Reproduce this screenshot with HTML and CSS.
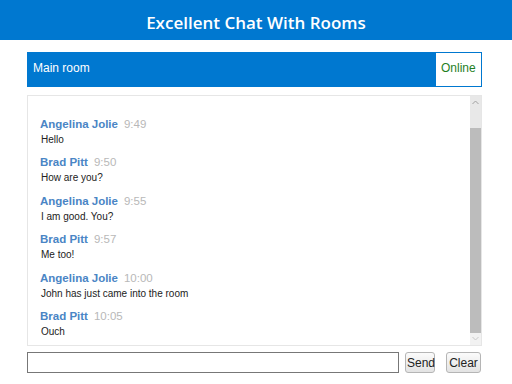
FILE: index.html
```html
<!DOCTYPE html>
<html lang="en">
<head>
  <meta charset="UTF-8">
  <meta name="viewport" content="width=device-width, initial-scale=1.0">
  <title>Excellent Chat With Rooms</title>
  <link rel="stylesheet" href="styles.css">
</head>
<body>
  <header>
    <h1>Excellent Chat With Rooms</h1>
  </header>

  <div class="container">
    <div class="room-bar">
      <div class="room-name">Main room</div>
      <div class="room-status">Online</div>
    </div>

    <div class="chat-box">
      <div class="messages">
        <div class="message">
          <div class="meta"><span class="author">Angelina Jolie</span><span class="time">9:49</span></div>
          <div class="text">Hello</div>
        </div>
        <div class="message">
          <div class="meta"><span class="author">Brad Pitt</span><span class="time">9:50</span></div>
          <div class="text">How are you?</div>
        </div>
        <div class="message">
          <div class="meta"><span class="author">Angelina Jolie</span><span class="time">9:55</span></div>
          <div class="text">I am good. You?</div>
        </div>
        <div class="message">
          <div class="meta"><span class="author">Brad Pitt</span><span class="time">9:57</span></div>
          <div class="text">Me too!</div>
        </div>
        <div class="message">
          <div class="meta"><span class="author">Angelina Jolie</span><span class="time">10:00</span></div>
          <div class="text">John has just came into the room</div>
        </div>
        <div class="message">
          <div class="meta"><span class="author">Brad Pitt</span><span class="time">10:05</span></div>
          <div class="text">Ouch</div>
        </div>
      </div>

      <!-- fake scrollbar -->
      <div class="scrollbar">
        <div class="scroll-btn">
          <svg width="7" height="5" viewBox="0 0 7 5"><path d="M0.5 4 L3.5 1 L6.5 4" fill="none" stroke="#a0a0a0" stroke-width="1"/></svg>
        </div>
        <div class="scroll-thumb"></div>
        <div class="scroll-btn bottom">
          <svg width="7" height="5" viewBox="0 0 7 5"><path d="M0.5 1 L3.5 4 L6.5 1" fill="none" stroke="#c8c8c8" stroke-width="1"/></svg>
        </div>
      </div>
    </div>

    <div class="input-row">
      <input type="text" class="msg-input">
      <button class="send">Send</button>
      <button class="clear">Clear</button>
    </div>
  </div>
</body>
</html>
```

FILE: styles.css
```css
* { margin: 0; padding: 0; box-sizing: border-box; }
body {
  font-family: 'Liberation Sans', Arial, sans-serif;
  background-color: #ffffff;
  color: #222222;
}

header {
  background-color: #0078d0;
  height: 40px;
  display: flex;
  align-items: center;
  justify-content: center;
}
header h1 {
  font-family: 'Open Sans', sans-serif;
  font-size: 17px;
  font-weight: 600;
  color: #ffffff;
  padding-top: 5px;
}

.container { margin: 12px 30px 0 27px; }

.room-bar {
  display: flex;
  height: 35px;
  background-color: #0078d0;
  border: 1px solid #0078d0;
}
.room-name {
  flex: 1;
  display: flex;
  align-items: center;
  padding: 0 0 3px 5px;
  color: #ffffff;
  font-size: 12px;
}
.room-status {
  display: flex;
  align-items: center;
  width: 45px;
  padding: 0 0 3px 5px;
  background: #ffffff;
  color: #1f7f1f;
  font-size: 12px;
}

.chat-box {
  margin-top: 8px;
  height: 251px;
  border: 1px solid #e6e6e6;
  display: flex;
}
.messages {
  flex: 1;
  padding: 21px 12px 0;
  display: flex;
  flex-direction: column;
  gap: 8.4px;
}
.meta { font-size: 12px; line-height: 15px; height: 15px; }
.author {
  font-size: 11.5px;
  font-weight: bold;
  color: #4a85c5;
}
.time {
  font-size: 11.5px;
  color: #b8b8b8;
  margin-left: 6px;
}
.text {
  font-size: 10px;
  line-height: 15px;
  height: 15px;
  padding-left: 1px;
}

.scrollbar {
  width: 11px;
  display: flex;
  flex-direction: column;
  background: #e8e8e8;
}
.scroll-btn {
  height: 32px;
  display: flex;
  justify-content: center;
  padding-top: 4px;
}
.scroll-btn.bottom { height: 12px; padding-top: 3px; background: #f2f2f2; }
.scroll-thumb { flex: 1; background: #bcbcbc; }

.input-row {
  margin-top: 6px;
  display: flex;
  align-items: center;
}
.msg-input {
  width: 372px;
  height: 21px;
  border: 1px solid #777777;
}
button {
  font-family: 'Liberation Sans', Arial, sans-serif;
  font-size: 12px;
  height: 21px;
  padding: 0 1px;
  color: #222222;
  border: 1px solid #b5b5b5;
  border-radius: 3px;
  background: linear-gradient(#fbfbfb, #e3e3e3);
}
.send { margin-left: 6px; width: 30px; }
.clear { margin-left: 11px; width: 35px; }
```
